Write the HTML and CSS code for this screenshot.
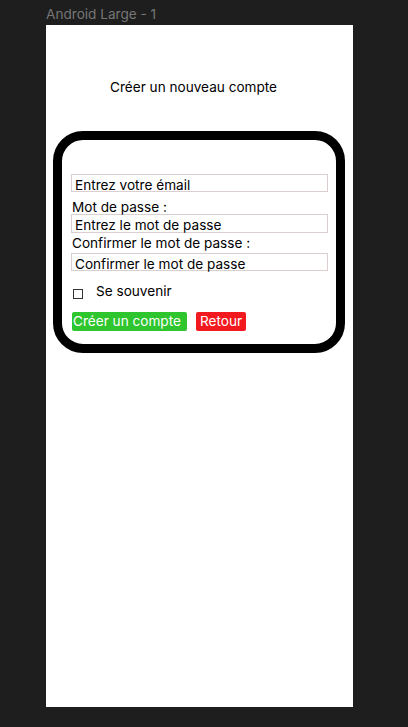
FILE: index.html
```html
<!DOCTYPE html>
<html lang="fr">
<head>
<meta charset="utf-8">
<title>Android Large - 1</title>
<link rel="stylesheet" href="styles.css">
</head>
<body>
<div class="frame-label">Android Large - 1</div>
<div class="frame">
  <h1 class="title">Créer un nouveau compte</h1>
  <div class="card">
    <div class="field field-first">Entrez votre émail</div>
    <div class="label">Mot de passe :</div>
    <div class="field field-pass">Entrez le mot de passe</div>
    <div class="label label-confirm">Confirmer le mot de passe :</div>
    <div class="field field-confirm">Confirmer le mot de passe</div>
    <div class="remember">
      <span class="checkbox"></span>
      <span class="remember-text">Se souvenir</span>
    </div>
    <div class="actions">
      <span class="btn btn-create">Créer un compte</span>
      <span class="btn btn-back">Retour</span>
    </div>
  </div>
</div>
</body>
</html>
```

FILE: styles.css
```css
* { box-sizing: border-box; }

html, body {
  margin: 0;
  padding: 0;
  background: #1e1e1e;
}

body {
  padding-left: 46px;
  font-family: Inter, "Noto Sans", sans-serif;
  color: #000;
  height: 727px;
  overflow: hidden;
}

.frame-label {
  height: 25px;
  padding-top: 6px;
  font-size: 13.6px;
  line-height: 16px;
  color: #767676;
}

.frame {
  width: 307px;
  height: 682px;
  background: #fff;
  padding-top: 54px;
}

.title {
  margin: 0 0 0 64px;
  font-size: 13.6px;
  font-weight: 400;
  line-height: 17px;
}

.card {
  margin: 35px 0 0 7px;
  width: 292px;
  height: 222px;
  border: 9px solid #000;
  border-radius: 30px;
  padding: 34px 8px 0 9px;
}

.field {
  height: 18px;
  border: 1px solid #dccdcf;
  padding: 0 3px;
  font-size: 13.6px;
  line-height: 20px;
  white-space: nowrap;
  overflow: visible;
}

.field-pass {
  height: 19px;
}

.field-confirm {
  margin-top: 3px;
}

.label {
  margin-top: 6px;
  padding-left: 1px;
  font-size: 13.6px;
  line-height: 18px;
  height: 16px;
  white-space: nowrap;
}

.label-confirm {
  margin-top: 1px;
}

.remember {
  display: flex;
  align-items: flex-start;
  margin-top: 12px;
  height: 17px;
}

.checkbox {
  width: 10px;
  height: 10px;
  margin: 6px 0 0 2px;
  border: 1px solid #333;
}

.remember-text {
  margin-left: 13px;
  font-size: 13.6px;
  line-height: 17px;
}

.actions {
  display: flex;
  gap: 9px;
  margin-top: 12px;
  padding-left: 1px;
}

.btn {
  display: block;
  height: 19px;
  border-radius: 2px;
  color: #fff;
  font-size: 13.6px;
  line-height: 19px;
  white-space: nowrap;
}

.btn-create {
  width: 115px;
  padding-left: 1px;
  background: #2ec52e;
}

.btn-back {
  width: 50px;
  padding-left: 4px;
  background: #f2191f;
}
```
